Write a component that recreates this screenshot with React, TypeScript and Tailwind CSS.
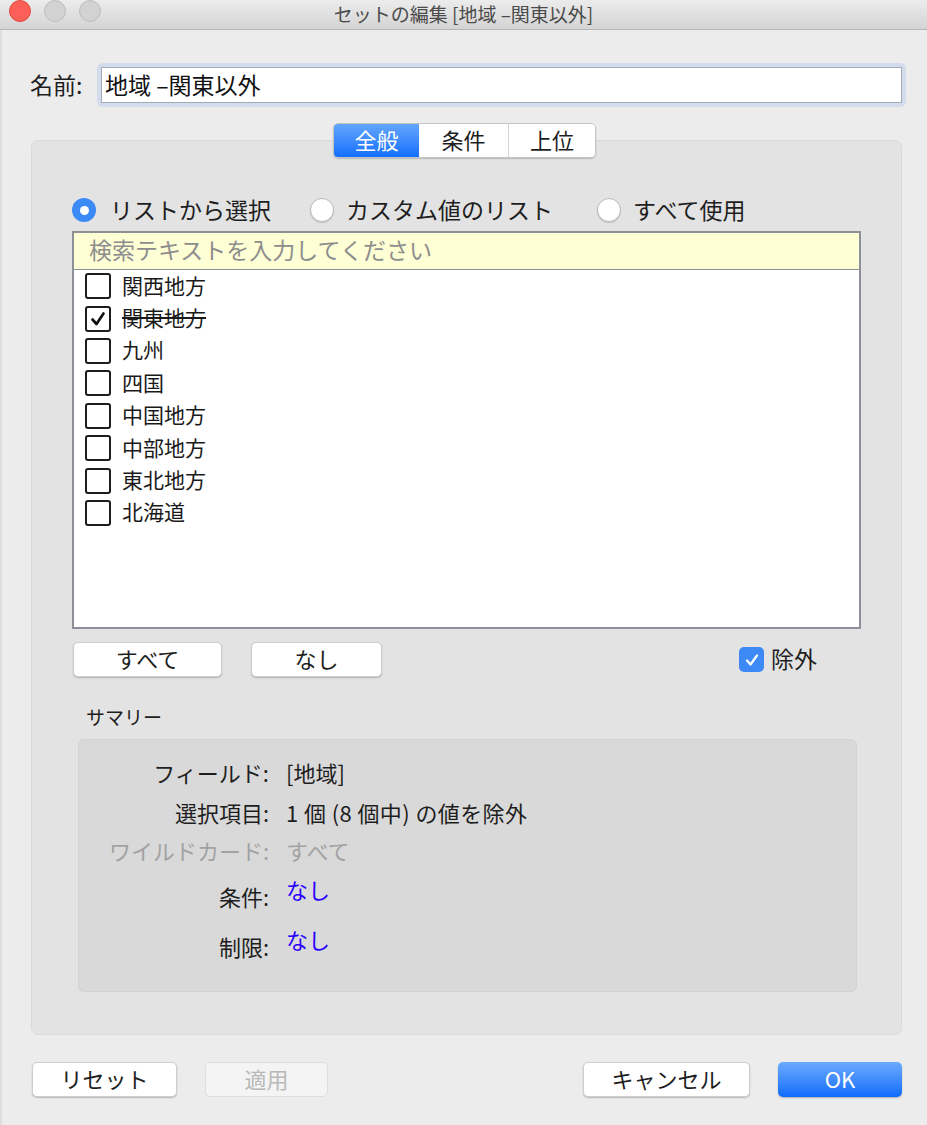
import React from 'react';

const font = { fontFamily: '"Noto Sans CJK JP", "Noto Sans", sans-serif' };

const regions = [
  { name: '関西地方', checked: false },
  { name: '関東地方', checked: true },
  { name: '九州', checked: false },
  { name: '四国', checked: false },
  { name: '中国地方', checked: false },
  { name: '中部地方', checked: false },
  { name: '東北地方', checked: false },
  { name: '北海道', checked: false },
];

function Radio({ selected }: { selected?: boolean }) {
  if (selected) {
    return (
      <span className="w-[24px] h-[24px] rounded-full bg-[#3b8af6] flex items-center justify-center shrink-0">
        <span className="w-[9px] h-[9px] rounded-full bg-white" />
      </span>
    );
  }
  return (
    <span className="w-[24px] h-[24px] rounded-full bg-white border border-[#b9b9b9] shadow-[0_1px_1px_rgba(0,0,0,0.15)] shrink-0" />
  );
}

function Check() {
  return (
    <svg width="18" height="18" viewBox="0 0 18 18">
      <path d="M3.5 9.5 L7.5 14 L14.5 3.5" fill="none" stroke="#111" strokeWidth="2.7" strokeLinecap="round" strokeLinejoin="round" />
    </svg>
  );
}

function Button({ label, className = '', disabled }: { label: string; className?: string; disabled?: boolean }) {
  return (
    <div
      className={`h-[35px] pb-[3px] rounded-[5px] flex items-center justify-center text-[22px] leading-none ${
        disabled
          ? 'bg-[#f4f4f4] border border-[#dedede] text-[#b9b9b9]'
          : 'bg-white border border-[#cdcdcd] shadow-[0_1px_1.5px_rgba(0,0,0,0.22)] text-[#1e1e1e]'
      } ${className}`}
    >
      {label}
    </div>
  );
}

export default function App() {
  return (
    <div className="w-[927px] h-[1125px] bg-[#ececec] overflow-hidden flex flex-col" style={font}>
      {/* Title bar */}
      <div className="h-[30px] shrink-0 relative bg-gradient-to-b from-[#ececec] to-[#d4d4d4] border-b border-[#b5b5b5] flex items-start justify-center">
        <div className="absolute left-[9px] top-0 w-[22px] h-[22px] rounded-full bg-[#fc5f57] border border-[#e1483f]" />
        <div className="absolute left-[44px] top-0 w-[22px] h-[22px] rounded-full bg-[#d2d2d2] border border-[#bdbdbd]" />
        <div className="absolute left-[79px] top-0 w-[22px] h-[22px] rounded-full bg-[#d2d2d2] border border-[#bdbdbd]" />
        <span className="text-[19px] leading-[28px] text-[#4b4b4b]">セットの編集 [地域 –関東以外]</span>
      </div>

      <div className="flex-1 flex flex-col border-l-2 border-[#dedede]">
        {/* Name */}
        <div className="flex items-center mt-[33px] pl-[28px] pr-[21px]">
          <span className="w-[67px] text-[23px] leading-none text-[#1e1e1e] pb-[2px]">名前:</span>
          <div className="flex-1 p-[4px] rounded-[6px] bg-[#d3dcec]">
            <div className="h-[36px] bg-white border border-[#a6aab3] flex items-center pl-[3px] pb-[2px] text-[23px] leading-none text-[#111]">
              地域 –関東以外
            </div>
          </div>
        </div>

        {/* Tabs */}
        <div className="flex justify-center mt-[16px] relative z-10">
          <div className="flex h-[35px] rounded-[5px] overflow-hidden border border-[#c4c4c4] shadow-[0_1px_1.5px_rgba(0,0,0,0.2)] text-[22px] leading-none">
            <div className="w-[85px] pb-[3px] flex items-center justify-center bg-gradient-to-b from-[#62a5fc] to-[#0f6efc] text-white">全般</div>
            <div className="w-[90px] pb-[3px] flex items-center justify-center bg-white text-[#1e1e1e] border-r border-[#d4d4d4]">条件</div>
            <div className="w-[86px] pb-[3px] flex items-center justify-center bg-white text-[#1e1e1e]">上位</div>
          </div>
        </div>

        {/* Panel */}
        <div className="-mt-[18px] ml-[29px] mr-[25px] h-[895px] rounded-[7px] bg-[#e3e3e3] border border-[#d9d9d9] px-[40px] pt-[57px] flex flex-col">
          <div className="flex items-center h-[24px] text-[23px] leading-none text-[#1e1e1e]">
            <div className="w-[238px] flex items-center gap-[14px]">
              <Radio selected />
              <span className="pb-[2px]">リストから選択</span>
            </div>
            <div className="w-[287px] flex items-center gap-[12px]">
              <Radio />
              <span className="pb-[2px]">カスタム値のリスト</span>
            </div>
            <div className="flex items-center gap-[12px]">
              <Radio />
              <span className="pb-[2px]">すべて使用</span>
            </div>
          </div>

          {/* List */}
          <div className="mt-[9px] h-[398px] border-2 border-[#8e9097] bg-white flex flex-col">
            <div className="h-[37px] shrink-0 bg-[#ffffd5] border-b border-[#8e9097] flex items-center pl-[15px] pb-[3px] text-[23px] leading-none text-[#8d8d8d]">
              検索テキストを入力してください
            </div>
            <div className="flex flex-col">
              {regions.map((r) => (
                <div key={r.name} className="h-[32.4px] flex items-center pl-[11px] gap-[11px]">
                  <span className="w-[26px] h-[26px] border-2 border-[#1d1d1d] rounded-[3px] bg-white flex items-center justify-center">
                    {r.checked && <Check />}
                  </span>
                  <span className={`text-[21px] leading-none text-[#1a1a1a] pb-[2px] ${r.checked ? 'line-through' : ''}`}>{r.name}</span>
                </div>
              ))}
            </div>
          </div>

          {/* Select buttons */}
          <div className="flex items-center mt-[13px]">
            <Button label="すべて" className="w-[149px] ml-[1px]" />
            <Button label="なし" className="w-[131px] ml-[29px]" />
            <div className="flex items-center ml-[357px] gap-[7px]">
              <span className="w-[25px] h-[25px] rounded-[5px] bg-[#3d8af7] flex items-center justify-center">
                <svg width="16" height="16" viewBox="0 0 16 16">
                  <path d="M3 8.5 L6.5 12.5 L13 3.5" fill="none" stroke="#fff" strokeWidth="2.2" strokeLinecap="round" strokeLinejoin="round" />
                </svg>
              </span>
              <span className="text-[23px] leading-none text-[#1e1e1e] pb-[2px]">除外</span>
            </div>
          </div>

          {/* Summary */}
          <div className="mt-[27px] pl-[14px] h-[24px] flex items-center text-[19px] leading-none text-[#1e1e1e]">サマリー</div>
          <div className="mt-[11px] ml-[6px] mr-[4px] h-[253px] rounded-[6px] bg-[#d9d9d9] border border-[#d2d2d2] flex flex-col text-[22px] leading-none">
            <div className="mt-[17px] h-[30px] flex items-center">
              <span className="w-[190px] text-right text-[#1e1e1e]">フィールド:</span>
              <span className="ml-[17px] text-[#1e1e1e]">[地域]</span>
            </div>
            <div className="mt-[10px] h-[30px] flex items-center">
              <span className="w-[190px] text-right text-[#1e1e1e]">選択項目:</span>
              <span className="ml-[17px] text-[#1e1e1e] tracking-[0.4px]">1 個 (8 個中) の値を除外</span>
            </div>
            <div className="mt-[8px] h-[30px] flex items-center">
              <span className="w-[190px] text-right text-[#a2a2a2]">ワイルドカード:</span>
              <span className="ml-[17px] text-[#a2a2a2]">すべて</span>
            </div>
            <div className="mt-[16px] h-[30px] flex items-center">
              <span className="w-[190px] text-right text-[#1e1e1e]">条件:</span>
              <span className="ml-[17px] text-[#2a00ff] -translate-y-[7px]">なし</span>
            </div>
            <div className="mt-[20px] h-[30px] flex items-center">
              <span className="w-[190px] text-right text-[#1e1e1e]">制限:</span>
              <span className="ml-[17px] text-[#2a00ff] -translate-y-[7px]">なし</span>
            </div>
          </div>
        </div>

        {/* Footer buttons */}
        <div className="flex items-center mt-[27px]">
          <Button label="リセット" className="w-[145px] ml-[30px]" />
          <Button label="適用" className="w-[123px] ml-[28px]" disabled />
          <Button label="キャンセル" className="w-[167px] ml-auto" />
          <div className="w-[124px] h-[35px] pb-[3px] ml-[28px] mr-[25px] rounded-[5px] bg-gradient-to-b from-[#6aa9fc] to-[#0c6bfd] shadow-[0_1px_1.5px_rgba(0,0,0,0.25)] flex items-center justify-center text-[22px] leading-none text-white">
            OK
          </div>
        </div>
      </div>
    </div>
  );
}
